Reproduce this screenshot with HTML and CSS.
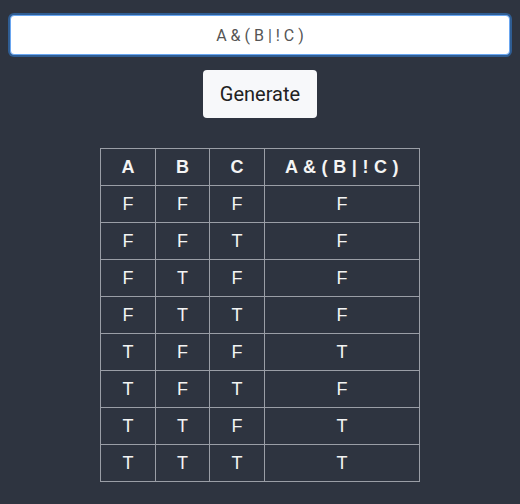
FILE: index.html
```html
<!DOCTYPE html>
<html>
<head>
<meta charset="utf-8">
<link rel="stylesheet" href="styles.css">
</head>
<body>
<main class="app">
  <input class="expr" type="text" value="A & ( B | ! C )" autofocus>
  <button class="gen">Generate</button>
  <table class="truth">
    <thead>
      <tr><th>A</th><th class="mid">B</th><th>C</th><th class="res">A &amp; ( B | ! C )</th></tr>
    </thead>
    <tbody>
      <tr><td>F</td><td>F</td><td>F</td><td>F</td></tr>
      <tr><td>F</td><td>F</td><td>T</td><td>F</td></tr>
      <tr><td>F</td><td>T</td><td>F</td><td>F</td></tr>
      <tr><td>F</td><td>T</td><td>T</td><td>F</td></tr>
      <tr><td>T</td><td>F</td><td>F</td><td>T</td></tr>
      <tr><td>T</td><td>F</td><td>T</td><td>F</td></tr>
      <tr><td>T</td><td>T</td><td>F</td><td>T</td></tr>
      <tr><td>T</td><td>T</td><td>T</td><td>T</td></tr>
    </tbody>
  </table>
</main>
<script>
  var i = document.querySelector('.expr');
  i.focus();
  i.setSelectionRange(i.value.length, i.value.length);
</script>
</body>
</html>
```

FILE: styles.css
```css
html, body {
  margin: 0;
  padding: 0;
  background: #2e3440;
}
.app {
  display: flex;
  flex-direction: column;
  align-items: center;
  padding: 15px 10px;
}
.expr {
  box-sizing: border-box;
  width: 100%;
  height: 40px;
  margin: 0;
  border: 1px solid #6aa6f0;
  border-radius: 4px;
  background: #fff;
  box-shadow: 0 0 0 2px #2f5d93;
  outline: none;
  font-family: Roboto, sans-serif;
  font-size: 16px;
  color: #555;
  text-align: center;
  padding: 0 8px;
}
.gen {
  margin-top: 15px;
  height: 48px;
  padding: 0 17px;
  border: none;
  border-radius: 4px;
  background: #f7f8fa;
  color: #222;
  font-family: Roboto, sans-serif;
  font-size: 20px;
}
.truth {
  margin-top: 30px;
  border-collapse: collapse;
  font-family: "Liberation Sans", Arial, sans-serif;
  font-size: 18px;
  color: #f4f4f4;
}
.truth th, .truth td {
  border: 1px solid #9a9ea6;
  height: 36px;
  padding: 0;
  text-align: center;
}
.truth th {
  width: 54px;
  font-weight: bold;
}
.truth th.mid {
  width: 53px;
}
.truth th.res {
  width: 154px;
  letter-spacing: 0.3px;
}
```
